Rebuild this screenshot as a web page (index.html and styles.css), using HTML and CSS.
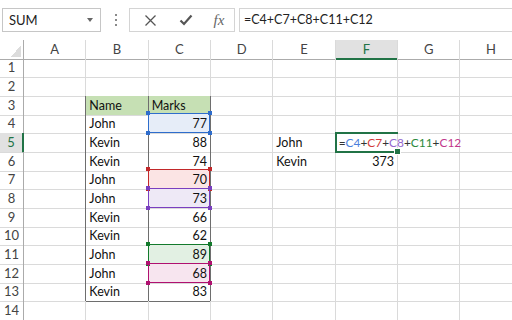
FILE: index.html
```html
<!DOCTYPE html>
<html lang="en">
<head>
    <meta charset="UTF-8">
    <title>Sheet - SUM formula</title>
    <link rel="stylesheet" href="styles.css">
</head>
<body>
    <!-- Barra de fórmulas -->
    <div class="toolbar">
        <div class="name-box">
            <span>SUM</span>
            <i class="caret"></i>
        </div>
        <div class="grip"><b></b><b></b><b></b></div>
        <div class="fx-buttons">
            <span class="fx-btn">
                <svg width="13" height="13" viewBox="0 0 13 13"><path d="M1.5 1.5 L11.5 11.5 M11.5 1.5 L1.5 11.5" stroke="#555" stroke-width="1.3" fill="none"/></svg>
            </span>
            <span class="fx-btn">
                <svg width="14" height="12" viewBox="0 0 14 12"><path d="M1.5 6.5 L5 10 L12.5 1.5" stroke="#555" stroke-width="2.2" fill="none"/></svg>
            </span>
            <span class="fx-btn fx-label">fx</span>
        </div>
        <div class="formula-input">
            =C4+C7+C8+C11+C12
        </div>
    </div>

    <!-- Planilha -->
    <div class="sheet">
        <div class="row head">
            <div class="corner"><i></i></div>
            <div class="ch">A</div>
            <div class="ch">B</div>
            <div class="ch">C</div>
            <div class="ch">D</div>
            <div class="ch">E</div>
            <div class="ch ch-active">F</div>
            <div class="ch">G</div>
            <div class="ch">H</div>
        </div>

        <div class="row">
            <div class="rh">1</div>
            <div class="c"></div><div class="c"></div><div class="c"></div><div class="c"></div>
            <div class="c"></div><div class="c"></div><div class="c"></div><div class="c"></div>
        </div>

        <div class="row">
            <div class="rh">2</div>
            <div class="c"></div><div class="c dark-b"></div><div class="c dark-b"></div><div class="c"></div>
            <div class="c"></div><div class="c"></div><div class="c"></div><div class="c"></div>
        </div>

        <div class="row">
            <div class="rh">3</div>
            <div class="c dark-r"></div>
            <div class="c dark-r tbl-head">Name</div>
            <div class="c dark-r tbl-head">Marks</div>
            <div class="c"></div><div class="c"></div><div class="c"></div><div class="c"></div><div class="c"></div>
        </div>

        <div class="row">
            <div class="rh">4</div>
            <div class="c dark-r"></div>
            <div class="c dark-r">John</div>
            <div class="c dark-r num ref ref-blue">77<span class="mark"></span></div>
            <div class="c"></div><div class="c"></div><div class="c"></div><div class="c"></div><div class="c"></div>
        </div>

        <div class="row">
            <div class="rh rh-active">5</div>
            <div class="c dark-r"></div>
            <div class="c dark-r">Kevin</div>
            <div class="c dark-r num">88</div>
            <div class="c"></div>
            <div class="c">John</div>
            <div class="c active"><span class="sel"></span><span class="entry">=<span class="f-blue">C4</span>+<span class="f-red">C7</span>+<span class="f-purple">C8</span>+<span class="f-green">C11</span>+<span class="f-pink">C12</span></span></div>
            <div class="c"></div><div class="c"></div>
        </div>

        <div class="row">
            <div class="rh">6</div>
            <div class="c dark-r"></div>
            <div class="c dark-r">Kevin</div>
            <div class="c dark-r num">74</div>
            <div class="c"></div>
            <div class="c">Kevin</div>
            <div class="c num">373</div>
            <div class="c"></div><div class="c"></div>
        </div>

        <div class="row">
            <div class="rh">7</div>
            <div class="c dark-r"></div>
            <div class="c dark-r">John</div>
            <div class="c dark-r num ref ref-red">70<span class="mark"></span></div>
            <div class="c"></div><div class="c"></div><div class="c"></div><div class="c"></div><div class="c"></div>
        </div>

        <div class="row">
            <div class="rh">8</div>
            <div class="c dark-r"></div>
            <div class="c dark-r">John</div>
            <div class="c dark-r num ref ref-purple">73<span class="mark"></span></div>
            <div class="c"></div><div class="c"></div><div class="c"></div><div class="c"></div><div class="c"></div>
        </div>

        <div class="row">
            <div class="rh">9</div>
            <div class="c dark-r"></div>
            <div class="c dark-r">Kevin</div>
            <div class="c dark-r num">66</div>
            <div class="c"></div><div class="c"></div><div class="c"></div><div class="c"></div><div class="c"></div>
        </div>

        <div class="row">
            <div class="rh">10</div>
            <div class="c dark-r"></div>
            <div class="c dark-r">Kevin</div>
            <div class="c dark-r num">62</div>
            <div class="c"></div><div class="c"></div><div class="c"></div><div class="c"></div><div class="c"></div>
        </div>

        <div class="row">
            <div class="rh">11</div>
            <div class="c dark-r"></div>
            <div class="c dark-r">John</div>
            <div class="c dark-r num ref ref-green">89<span class="mark"></span></div>
            <div class="c"></div><div class="c"></div><div class="c"></div><div class="c"></div><div class="c"></div>
        </div>

        <div class="row">
            <div class="rh">12</div>
            <div class="c dark-r"></div>
            <div class="c dark-r">John</div>
            <div class="c dark-r num ref ref-pink">68<span class="mark"></span></div>
            <div class="c"></div><div class="c"></div><div class="c"></div><div class="c"></div><div class="c"></div>
        </div>

        <div class="row">
            <div class="rh">13</div>
            <div class="c dark-r"></div>
            <div class="c dark-r dark-b">Kevin</div>
            <div class="c dark-r dark-b num">83</div>
            <div class="c"></div><div class="c"></div><div class="c"></div><div class="c"></div><div class="c"></div>
        </div>

        <div class="row">
            <div class="rh">14</div>
            <div class="c"></div><div class="c"></div><div class="c"></div><div class="c"></div>
            <div class="c"></div><div class="c"></div><div class="c"></div><div class="c"></div>
        </div>
    </div>
</body>
</html>
```

FILE: styles.css
```css
/* Base */
body {
    margin: 0;
    width: 512px;
    height: 320px;
    overflow: hidden;
    background: #fff;
    font-family: Lato, "Open Sans", sans-serif;
    color: #111;
}

/* Barra de fórmulas */
.toolbar {
    display: flex;
    align-items: flex-start;
    height: 40px;
    padding-top: 8px;
    box-sizing: border-box;
}

.name-box {
    display: flex;
    align-items: center;
    width: 99px;
    height: 24px;
    margin-left: 2px;
    padding: 0 7px 0 6px;
    box-sizing: border-box;
    border: 1px solid #c6c6c6;
    font-size: 13px;
    color: #222;
}

.caret {
    margin-left: auto;
    border-top: 4px solid #666;
    border-left: 3px solid transparent;
    border-right: 3px solid transparent;
}

.grip {
    display: flex;
    flex-direction: column;
    gap: 3px;
    width: 2px;
    margin: 6px 12px 0 14px;
}

.grip b {
    width: 2px;
    height: 2px;
    background: #8a8a8a;
}

.fx-buttons {
    display: flex;
    align-items: center;
    width: 106px;
    height: 24px;
    padding-left: 2px;
    box-sizing: border-box;
    border: 1px solid #d4d4d4;
}

.fx-btn {
    display: flex;
    justify-content: center;
    align-items: center;
    width: 36px;
}

.fx-label {
    font-family: "Liberation Serif", serif;
    font-style: italic;
    font-size: 15px;
    color: #666;
    width: 30px;
}

.formula-input {
    flex: 1;
    height: 24px;
    margin-left: 4px;
    padding-left: 4px;
    box-sizing: border-box;
    border: 1px solid #d4d4d4;
    border-right: none;
    font-size: 12.5px;
    line-height: 22px;
    color: #222;
}

/* Grade */
.row {
    display: grid;
    grid-template-columns: 24px repeat(8, 62.33px);
    height: 18.67px;
}

.row.head {
    height: 18.33px;
}

.corner {
    display: flex;
    justify-content: flex-end;
    align-items: flex-end;
    padding: 0 2px 2px 0;
    box-sizing: border-box;
    border-right: 1px solid #ababab;
    border-bottom: 1px solid #ababab;
}

.corner i {
    width: 10px;
    height: 12px;
    background: linear-gradient(to bottom right, transparent 50%, #dcdcdc 50%);
}

.ch {
    box-sizing: border-box;
    border-right: 1px solid #dadada;
    border-bottom: 1px solid #ababab;
    text-align: center;
    font-size: 13px;
    line-height: 18px;
    color: #444;
}

.ch-active {
    background: #e1e1e1;
    border-bottom: 2px solid #217346;
    color: #217346;
}

.rh {
    box-sizing: border-box;
    border-right: 1px solid #ababab;
    border-bottom: 1px solid #dadada;
    text-align: center;
    font-size: 13px;
    line-height: 19px;
    color: #444;
}

.rh-active {
    background: #e1e1e1;
    border-right: 2px solid #217346;
    color: #217346;
}

.c {
    box-sizing: border-box;
    border-right: 1px solid #dadada;
    border-bottom: 1px solid #dadada;
    padding: 0 3px;
    font-size: 12.5px;
    line-height: 19px;
    white-space: nowrap;
}

.num {
    text-align: right;
}

.dark-r {
    border-right-color: #6e6e6e;
}

.dark-b {
    border-bottom-color: #6e6e6e;
}

.tbl-head {
    background: #c6e0b4;
}

/* Referências da fórmula */
.ref {
    position: relative;
}

.ref .mark {
    position: absolute;
    top: -3px;
    left: -3px;
    right: -2px;
    bottom: -2px;
    z-index: 2;
    background:
        linear-gradient(currentColor, currentColor) left top / 4px 4px no-repeat,
        linear-gradient(currentColor, currentColor) right top / 4px 4px no-repeat,
        linear-gradient(currentColor, currentColor) left bottom / 4px 4px no-repeat,
        linear-gradient(currentColor, currentColor) right bottom / 4px 4px no-repeat;
}

.ref .mark::before {
    content: "";
    position: absolute;
    top: 2px;
    left: 2px;
    right: 2px;
    bottom: 2px;
    border: 1px solid currentColor;
}

.ref-blue { background: #e6edf8; }
.ref-blue .mark { color: #2e6dcc; }
.ref-red { background: #fbe4e4; }
.ref-red .mark { color: #c2282a; }
.ref-purple { background: #eee9f6; }
.ref-purple .mark { color: #7a3fc0; }
.ref-green { background: #e2f0e3; }
.ref-green .mark { color: #137a2c; }
.ref-pink { background: #f7e5ef; }
.ref-pink .mark { color: #b01070; }

/* Célula ativa */
.active {
    position: relative;
    overflow: visible;
    color: #333;
    font-size: 11.9px;
}

.entry {
    position: relative;
    z-index: 3;
}

.sel {
    position: absolute;
    top: -1px;
    left: -1px;
    right: -1px;
    bottom: -1px;
    z-index: 2;
    border: 2px solid #217346;
    border-right: none;
}

.sel::after {
    content: "";
    position: absolute;
    right: -3px;
    bottom: -4px;
    width: 5px;
    height: 5px;
    background: #217346;
    border: 1px solid #fff;
}

.f-blue { color: #4a7fdc; }
.f-red { color: #d23a3a; }
.f-purple { color: #9467cf; }
.f-green { color: #2c8a3c; }
.f-pink { color: #c2378c; }
```
